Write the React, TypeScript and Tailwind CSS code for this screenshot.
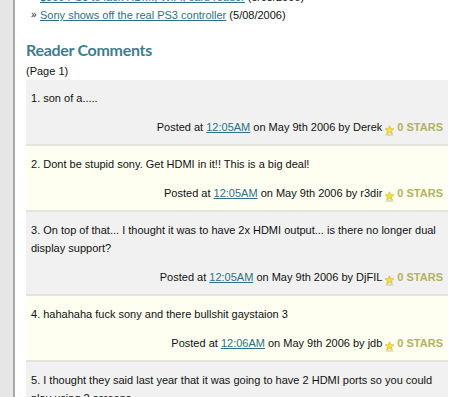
const related = [
  { title: "$500 PS3 to lack HDMI, WiFi, card reader", date: "5/08/2006" },
  { title: "Sony shows off the real PS3 controller", date: "5/08/2006" },
];

const comments = [
  { n: 1, text: "son of a.....", time: "12:05AM", author: "Derek" },
  { n: 2, text: "Dont be stupid sony. Get HDMI in it!! This is a big deal!", time: "12:05AM", author: "r3dir" },
  {
    n: 3,
    text: "On top of that... I thought it was to have 2x HDMI output... is there no longer dual display support?",
    time: "12:05AM",
    author: "DjFIL",
  },
  { n: 4, text: "hahahaha fuck sony and there bullshit gaystaion 3", time: "12:06AM", author: "jdb" },
  {
    n: 5,
    text: "I thought they said last year that it was going to have 2 HDMI ports so you could play using 2 screens.",
    time: "12:07AM",
    author: "Mike",
  },
];

const Star = () => (
  <svg width="11" height="11" viewBox="0 0 12 12" className="inline-block mx-[2px] relative top-[2px]">
    <ellipse cx="6" cy="10.8" rx="4.5" ry="1" fill="#c9c9a0" opacity="0.7" />
    <path
      d="M6 0.8 L7.4 4 L10.8 4.2 L8.2 6.4 L9 9.6 L6 7.9 L3 9.6 L3.8 6.4 L1.2 4.2 L4.6 4 Z"
      fill="#f4e23a"
      stroke="#c9a81c"
      strokeWidth="0.6"
    />
  </svg>
);

export default function App() {
  return (
    <div className="flex w-[450px] h-[397px] overflow-hidden bg-white font-['Liberation_Sans',Arial,sans-serif] text-[11px] text-[#111]">
      <div className="w-[15px] shrink-0 bg-[#e6e6e6] border-r-2 border-[#a9a9a9]" />
      <div className="flex-1 pl-[11px] pr-[2px]">
        <ul className="-mt-[12px] leading-[18px]">
          {related.map((r) => (
            <li key={r.title} className="flex">
              <span className="w-[14px] pl-[5px] text-[10px]">»</span>
              <span>
                <a href="#" className="text-[#2f7184] underline">
                  {r.title}
                </a>{" "}
                ({r.date})
              </span>
            </li>
          ))}
        </ul>
        <h2 className="mt-[15px] font-['Lato',sans-serif] font-bold text-[16px] leading-[22px] tracking-[-0.3px] text-[#3f7d8c]">
          Reader Comments
        </h2>
        <p className="mt-[2px] leading-[16px]">(Page 1)</p>
        <div className="mt-[1px]">
          {comments.map((c) => (
            <div
              key={c.n}
              className={
                c.n % 2 === 1
                  ? "bg-[#f1f1f1] border-b-2 border-[#e4e4dc] px-[5px] pt-[9px] pb-[8px] leading-[18px]"
                  : "bg-[#fefef1] border-b-2 border-[#e4e4dc] px-[5px] pt-[9px] pb-[8px] leading-[18px]"
              }
            >
              <p>
                {c.n}. {c.text}
              </p>
              <p className="mt-[11px] text-right">
                Posted at{" "}
                <a href="#" className="text-[#2f7184] underline">
                  {c.time}
                </a>{" "}
                on May 9th 2006 by {c.author}
                <Star />
                <span className="font-bold text-[#b2b35e]">0 STARS</span>
              </p>
            </div>
          ))}
        </div>
      </div>
    </div>
  );
}
